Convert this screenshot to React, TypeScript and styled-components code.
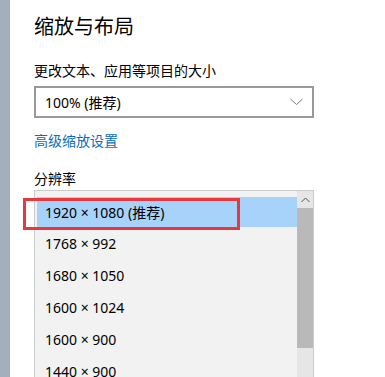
import React from "react";
import styled, { createGlobalStyle } from "styled-components";

const Global = createGlobalStyle`
  html, body { margin: 0; padding: 0; background: #ffffff; overflow: hidden; }
  body { font-family: "Noto Sans", "Noto Sans CJK SC", sans-serif; color: #000; }
`;

const Page = styled.div`
  display: flex;
  width: 385px;
  height: 377px;
  overflow: hidden;
`;

const SideStrip = styled.div`
  width: 10px;
  flex: none;
  background: #a3afbc;
`;

const Content = styled.div`
  flex: 1;
  padding-left: 24px;
  display: flex;
  flex-direction: column;
  align-items: flex-start;
  & > * {
    flex-shrink: 0;
  }
`;

const Title = styled.h1`
  margin: 12px 0 0;
  font-size: 20px;
  line-height: 28px;
  font-weight: 400;
  font-family: "Noto Sans CJK SC", sans-serif;
`;

const Label = styled.div<{ $top: number }>`
  margin-top: ${(p) => p.$top}px;
  font-size: 14px;
  line-height: 20px;
  font-family: "Noto Sans CJK SC", sans-serif;
`;

const Select = styled.div`
  margin-top: 6px;
  box-sizing: border-box;
  width: 280px;
  height: 32px;
  border: 2px solid #999999;
  display: flex;
  align-items: center;
  justify-content: space-between;
  padding: 0 9px 0 9px;
  font-size: 14px;
`;

const Link = styled.a`
  margin-top: 12px;
  font-size: 14px;
  line-height: 20px;
  color: #0a6cc2;
  text-decoration: none;
  font-family: "Noto Sans CJK SC", sans-serif;
`;

const ListWrap = styled.div`
  position: relative;
  margin-top: 2px;
  box-sizing: border-box;
  width: 280px;
  height: 200px;
  border: 1px solid #cccccc;
  background: #f2f2f2;
  display: flex;
`;

const List = styled.div`
  flex: 1;
  overflow: hidden;
  padding: 4px 0 0 2px;
`;

const Row = styled.div<{ $selected?: boolean }>`
  height: 32px;
  box-sizing: border-box;
  padding: ${(p) => (p.$selected ? "2px 0 0 0" : "0")};
  background: ${(p) => (p.$selected ? "#a7d3fb" : "transparent")};
  background-clip: content-box;
  display: flex;
  align-items: center;
  font-size: 14px;
  & > span {
    padding-left: 8px;
  }
`;

const ScrollBar = styled.div`
  width: 16px;
  flex: none;
  display: flex;
  flex-direction: column;
  background: #e6e6e6;
`;

const ScrollButton = styled.div`
  height: 17px;
  display: flex;
  align-items: center;
  justify-content: center;
  background: #e6e6e6;
`;

const Thumb = styled.div`
  height: 140px;
  background: #b9b9b9;
`;

const Highlight = styled.div`
  position: absolute;
  left: -12px;
  top: 7px;
  width: 217px;
  height: 32px;
  box-sizing: border-box;
  border: 3px solid #e8383d;
  pointer-events: none;
`;

const rows = ["1920 × 1080 (推荐)", "1768 × 992", "1680 × 1050", "1600 × 1024", "1600 × 900", "1440 × 900"];

export default function App() {
  return (
    <>
      <Global />
      <Page>
        <SideStrip />
        <Content>
          <Title>缩放与布局</Title>
          <Label $top={20}>更改文本、应用等项目的大小</Label>
          <Select>
            <span>100% (推荐)</span>
            <svg width="13" height="8" viewBox="0 0 13 8">
              <path d="M0.5 1 L6.5 6.5 L12.5 1" fill="none" stroke="#777" strokeWidth="1" />
            </svg>
          </Select>
          <Link>高级缩放设置</Link>
          <Label $top={18}>分辨率</Label>
          <ListWrap>
            <List>
              {rows.map((r, i) => (
                <Row key={r} $selected={i === 0}>
                  <span>{r}</span>
                </Row>
              ))}
            </List>
            <ScrollBar>
              <ScrollButton>
                <svg width="9" height="6" viewBox="0 0 9 6">
                  <path d="M0.5 5 L4.5 1 L8.5 5" fill="none" stroke="#555" strokeWidth="1" />
                </svg>
              </ScrollButton>
              <Thumb />
            </ScrollBar>
            <Highlight />
          </ListWrap>
        </Content>
      </Page>
    </>
  );
}
